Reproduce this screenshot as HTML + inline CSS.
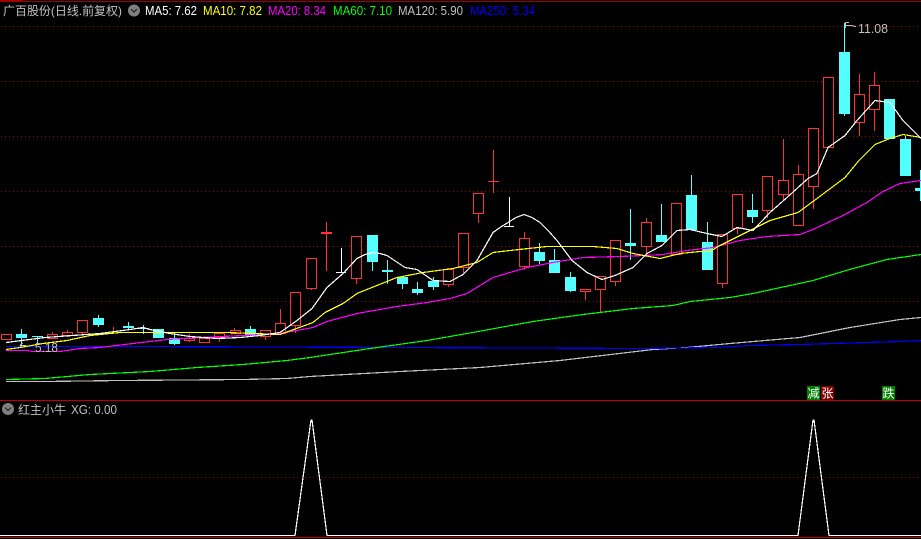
<!DOCTYPE html>
<html>
<head>
<meta charset="utf-8">
<style>
html,body{margin:0;padding:0;background:#000;width:921px;height:539px;overflow:hidden}
svg{display:block;position:absolute;left:0;top:0}
text{font-family:"Liberation Sans","Noto Sans CJK SC",sans-serif;font-size:12px}
.t{font-size:12.5px}
.l{fill:none;stroke-width:1;shape-rendering:crispEdges}
.m{fill:none;stroke-width:1.2;shape-rendering:crispEdges}
.r{fill:#000;stroke:#ff3232;stroke-width:1;shape-rendering:crispEdges}
.c{fill:#54ffff;shape-rendering:crispEdges}
.f{fill:#ff3232;shape-rendering:crispEdges}
.g{shape-rendering:crispEdges}
</style>
</head>
<body>
<svg width="921" height="539" viewBox="0 0 921 539">
<defs>
<pattern id="d" x="1" y="0" width="4" height="1" patternUnits="userSpaceOnUse"><rect width="1" height="1" fill="#a00000"/></pattern>
</defs>
<rect width="921" height="539" fill="#000"/>
<rect x="0" y="1" width="921" height="1" fill="#a00000" shape-rendering="crispEdges"/>
<rect x="0" y="0" width="23" height="1" fill="#a00000" shape-rendering="crispEdges"/>
<g>
<rect class="g" x="0" y="26" width="921" height="1" fill="url(#d)"/>
<rect class="g" x="0" y="81" width="921" height="1" fill="url(#d)"/>
<rect class="g" x="0" y="136" width="921" height="1" fill="url(#d)"/>
<rect class="g" x="0" y="191" width="921" height="1" fill="url(#d)"/>
<rect class="g" x="0" y="246" width="921" height="1" fill="url(#d)"/>
<rect class="g" x="0" y="301" width="921" height="1" fill="url(#d)"/>
<rect class="g" x="0" y="477" width="921" height="1" fill="url(#d)"/>
</g>
<!-- wicks -->
<path class="l" stroke="#ff3232" d="M52.5 332V339M67.5 330V337M82.5 332V334M113.5 327V333M189.5 334V342M219.5 333V342M234.5 328V334M265.5 336V340M280.5 309V334M295.5 325V333M311.5 288V290M326.5 222V271M356.5 278V284M448.5 268V287M463.5 267V273M478.5 214V223M493.5 150V193M524.5 232V238M524.5 267V270M585.5 292V300M600.5 290V312M615.5 282V286M646.5 218V222M646.5 247V257M722.5 284V288M737.5 228V234M767.5 210V218M783.5 139V200M798.5 165V174M813.5 187V209M859.5 74V136M874.5 72V131"/>
<path class="l" stroke="#54ffff" d="M21.5 329V347M37.5 336V343M98.5 315V327M128.5 322V330M143.5 325V334M174.5 333V345M250.5 326V337M372.5 262V271M387.5 260V284M402.5 284V289M417.5 282V295M433.5 277V290M539.5 243V264M554.5 249V260M570.5 272V292M630.5 209V260M661.5 204V235M691.5 175V195M707.5 222V242M752.5 194V223M844.5 23V116M905.5 136V139"/>
<path class="l" stroke="#ffffff" d="M341.5 248V272M509.5 197V226"/>
<!-- red hollow boxes -->
<rect class="r" x="1.5" y="334.5" width="10" height="5"/>
<rect class="r" x="47.5" y="334.5" width="10" height="4"/>
<rect class="r" x="62.5" y="332.5" width="10" height="3"/>
<rect class="r" x="77.5" y="320.5" width="10" height="12"/>
<rect class="r" x="184.5" y="338.5" width="10" height="2"/>
<rect class="r" x="199.5" y="338.5" width="10" height="4"/>
<rect class="r" x="214.5" y="333.5" width="10" height="4"/>
<rect class="r" x="230.5" y="330.5" width="10" height="3"/>
<rect class="r" x="260.5" y="330.5" width="10" height="6"/>
<rect class="r" x="275.5" y="323.5" width="10" height="10"/>
<rect class="r" x="290.5" y="292.5" width="10" height="33"/>
<rect class="r" x="306.5" y="258.5" width="10" height="30"/>
<rect class="r" x="351.5" y="236.5" width="10" height="42"/>
<rect class="r" x="443.5" y="269.5" width="10" height="15"/>
<rect class="r" x="458.5" y="233.5" width="10" height="34"/>
<rect class="r" x="473.5" y="193.5" width="10" height="20"/>
<rect class="r" x="519.5" y="238.5" width="10" height="28"/>
<rect class="r" x="580.5" y="289.5" width="10" height="2"/>
<rect class="r" x="595.5" y="276.5" width="10" height="13"/>
<rect class="r" x="610.5" y="240.5" width="10" height="41"/>
<rect class="r" x="641.5" y="222.5" width="10" height="24"/>
<rect class="r" x="671.5" y="203.5" width="10" height="51"/>
<rect class="r" x="717.5" y="234.5" width="10" height="49"/>
<rect class="r" x="732.5" y="194.5" width="10" height="34"/>
<rect class="r" x="762.5" y="176.5" width="10" height="34"/>
<rect class="r" x="778.5" y="180.5" width="10" height="14"/>
<rect class="r" x="793.5" y="174.5" width="10" height="51"/>
<rect class="r" x="808.5" y="128.5" width="10" height="58"/>
<rect class="r" x="823.5" y="77.5" width="10" height="70"/>
<rect class="r" x="854.5" y="94.5" width="10" height="28"/>
<rect class="r" x="869.5" y="85.5" width="10" height="24"/>
<!-- red crosses -->
<rect class="f" x="321" y="232" width="11" height="2"/>
<rect class="f" x="488" y="181" width="11" height="1"/>
<!-- white crosses -->
<rect x="336" y="272" width="10" height="1" fill="#fff" shape-rendering="crispEdges"/>
<rect x="504" y="226" width="10" height="1" fill="#fff" shape-rendering="crispEdges"/>
<!-- cyan bodies -->
<rect class="c" x="16" y="334" width="11" height="4"/>
<rect class="c" x="32" y="336" width="11" height="1"/>
<rect class="c" x="93" y="318" width="11" height="7"/>
<rect class="c" x="123" y="326" width="11" height="2"/>
<rect class="c" x="138" y="328" width="11" height="1"/>
<rect class="c" x="153" y="329" width="11" height="9"/>
<rect class="c" x="169" y="338" width="11" height="6"/>
<rect class="c" x="245" y="329" width="11" height="6"/>
<rect class="c" x="367" y="235" width="11" height="27"/>
<rect class="c" x="382" y="270" width="11" height="2"/>
<rect class="c" x="397" y="277" width="11" height="7"/>
<rect class="c" x="412" y="289" width="11" height="4"/>
<rect class="c" x="428" y="281" width="11" height="6"/>
<rect class="c" x="534" y="252" width="11" height="9"/>
<rect class="c" x="549" y="260" width="11" height="13"/>
<rect class="c" x="565" y="277" width="11" height="14"/>
<rect class="c" x="625" y="243" width="11" height="3"/>
<rect class="c" x="656" y="235" width="11" height="7"/>
<rect class="c" x="686" y="195" width="11" height="35"/>
<rect class="c" x="702" y="242" width="11" height="28"/>
<rect class="c" x="747" y="210" width="11" height="7"/>
<rect class="c" x="839" y="52" width="11" height="62"/>
<rect class="c" x="884" y="99" width="11" height="40"/>
<rect class="c" x="900" y="139" width="11" height="37"/>
<rect class="c" x="920" y="170" width="1" height="31"/>
<rect class="c" x="915" y="188" width="6" height="3"/>
<!-- MA lines -->
<polyline class="m" stroke="#c0c0c0" points="6,381.5 45,381.5 120,380.5 243,379.5 287,378.5 310,376.5 400,371.5 480,367.5 560,360.5 653,349.5 687,347.5 730,343.5 800,337.5 850,327.5 900,319.5 921,317.5"/>
<polyline class="m" stroke="#0000ff" points="6,346.5 136,346.5 400,347.5 640,348.5 715,347.5 750,345.5 800,344.5 900,341.5 921,340.5"/>
<polyline class="m" stroke="#00ff00" points="6,379.5 45,378.5 90,374.5 150,371.5 197,367.5 243,364.5 287,360.5 310,357.5 370,348.5 427,340.5 467,333.5 500,327.5 533,321.5 583,314.5 633,308.5 673,305.5 690,301.5 730,297.5 753,293.5 813,280.5 853,268.5 887,259.5 921,254.5"/>
<polyline class="m" stroke="#ff00ff" points="6,350.5 27,350.5 33,351.5 60,351.5 80,348.5 100,347.5 133,343.5 167,339.5 200,337.5 243,335.5 280,333.5 313,327.5 327,321.5 357,313.5 397,306.5 427,302.5 450,298.5 467,293.5 493,277.5 510,272.5 527,267.5 553,262.5 583,257.5 620,256.5 643,255.5 663,254.5 687,250.5 713,247.5 740,240.5 767,236.5 800,234.5 813,229.5 843,215.5 867,202.5 883,191.5 900,183.5 921,180.5"/>
<polyline class="m" stroke="#ffff00" points="6,349.5 20,347.5 43,343.5 67,340.5 90,335.5 120,332.5 167,332.5 227,332.5 280,334.5 313,322.5 325,312.5 343,303.5 357,293.5 397,277.5 423,272.5 453,268.5 477,262.5 493,252.5 510,250.5 547,246.5 593,246.5 617,248.5 633,253.5 660,258.5 680,253.5 700,251.5 710,251.5 720,245.5 740,235.5 770,220.5 798,212.5 817,198.5 845,177.5 859,160.5 875,144.5 890,138.5 903,134.5 921,137.5"/>
<polyline class="m" stroke="#ffffff" points="6,342.5 45,337.5 100,333.5 130,329.5 143,327.5 150,329.5 170,333.5 190,336.5 217,338.5 240,337.5 260,335.5 280,332.5 297,320.5 312,308.5 327,287.5 343,273.5 357,258.5 365,254.5 373,252.5 380,253.5 387,255.5 405,267.5 417,269.5 433,280.5 450,281.5 463,274.5 477,260.5 493,232.5 500,227.5 508,222.5 516,217.5 524,214.5 532,217.5 540,222.5 549,231.5 557,240.5 572,260.5 587,272.5 602,279.5 615,275.5 633,267.5 647,253.5 662,245.5 677,230.5 690,229.5 707,233.5 722,236.5 737,227.5 753,230.5 770,212.5 787,197.5 808,178.5 817,173.5 828,147.5 845,135.5 857,120.5 875,100.5 890,102.5 903,120.5 921,138.5"/>
<!-- high/low labels -->
<path class="l" stroke="#c0c0c0" d="M845.5 28V22.5H849M846 25.5H851L856 26.5"/>
<text x="858" y="33" fill="#c0c0c0" style="font-size:13px" textLength="30" lengthAdjust="spacingAndGlyphs">11.08</text>
<path class="l" stroke="#c0c0c0" d="M20 345.5H26M22.5 343L20 345.5L22.5 348"/>
<text x="35" y="352" fill="#c0c0c0" style="font-size:13px" textLength="23" lengthAdjust="spacingAndGlyphs">5.18</text>
<!-- header -->
<text x="3" y="15" fill="#c0c0c0" textLength="119">广百股份(日线.前复权)</text>
<circle cx="134" cy="10.5" r="6" fill="#808080"/>
<path d="M131 9L134 12L137 9" fill="none" stroke="#222" stroke-width="1.2"/>
<text class="t" x="145" y="15" fill="#ffffff" textLength="52" lengthAdjust="spacingAndGlyphs">MA5: 7.62</text>
<text class="t" x="203" y="15" fill="#ffff00" textLength="59" lengthAdjust="spacingAndGlyphs">MA10: 7.82</text>
<text class="t" x="268" y="15" fill="#ff00ff" textLength="58" lengthAdjust="spacingAndGlyphs">MA20: 8.34</text>
<text class="t" x="333" y="15" fill="#00ff00" textLength="59" lengthAdjust="spacingAndGlyphs">MA60: 7.10</text>
<text class="t" x="398" y="15" fill="#c0c0c0" textLength="65" lengthAdjust="spacingAndGlyphs">MA120: 5.90</text>
<text class="t" x="470" y="15" fill="#0000ff" textLength="65" lengthAdjust="spacingAndGlyphs">MA250: 5.34</text>
<!-- badges -->
<rect x="807" y="386" width="13" height="14" fill="#008000" shape-rendering="crispEdges"/>
<rect x="821" y="386" width="13" height="14" fill="#800000" shape-rendering="crispEdges"/>
<rect x="882" y="386" width="13" height="14" fill="#008000" shape-rendering="crispEdges"/>
<text x="807.5" y="397.5" fill="#fff">减</text>
<text x="821.5" y="397.5" fill="#fff">张</text>
<text x="882.5" y="397.5" fill="#fff">跌</text>
<!-- divider -->
<rect x="0" y="400" width="921" height="1" fill="#c00000" shape-rendering="crispEdges"/>
<!-- lower header -->
<circle cx="8" cy="409" r="6" fill="#808080"/>
<path d="M5 407.5L8 410.5L11 407.5" fill="none" stroke="#222" stroke-width="1.2"/>
<text x="18" y="414" fill="#c0c0c0">红主小牛</text>
<text class="t" x="71" y="414" fill="#c0c0c0" textLength="46" lengthAdjust="spacingAndGlyphs">XG: 0.00</text>
<!-- signal line -->
<polyline class="m" stroke="#ffffff" points="0,535.5 295,535.5 311,420 312,420 327,535.5 798,535.5 813,420 814,420 829,535.5 921,535.5"/>
<rect x="0" y="537" width="921" height="1" fill="#c00000" shape-rendering="crispEdges"/>
</svg>
</body>
</html>
